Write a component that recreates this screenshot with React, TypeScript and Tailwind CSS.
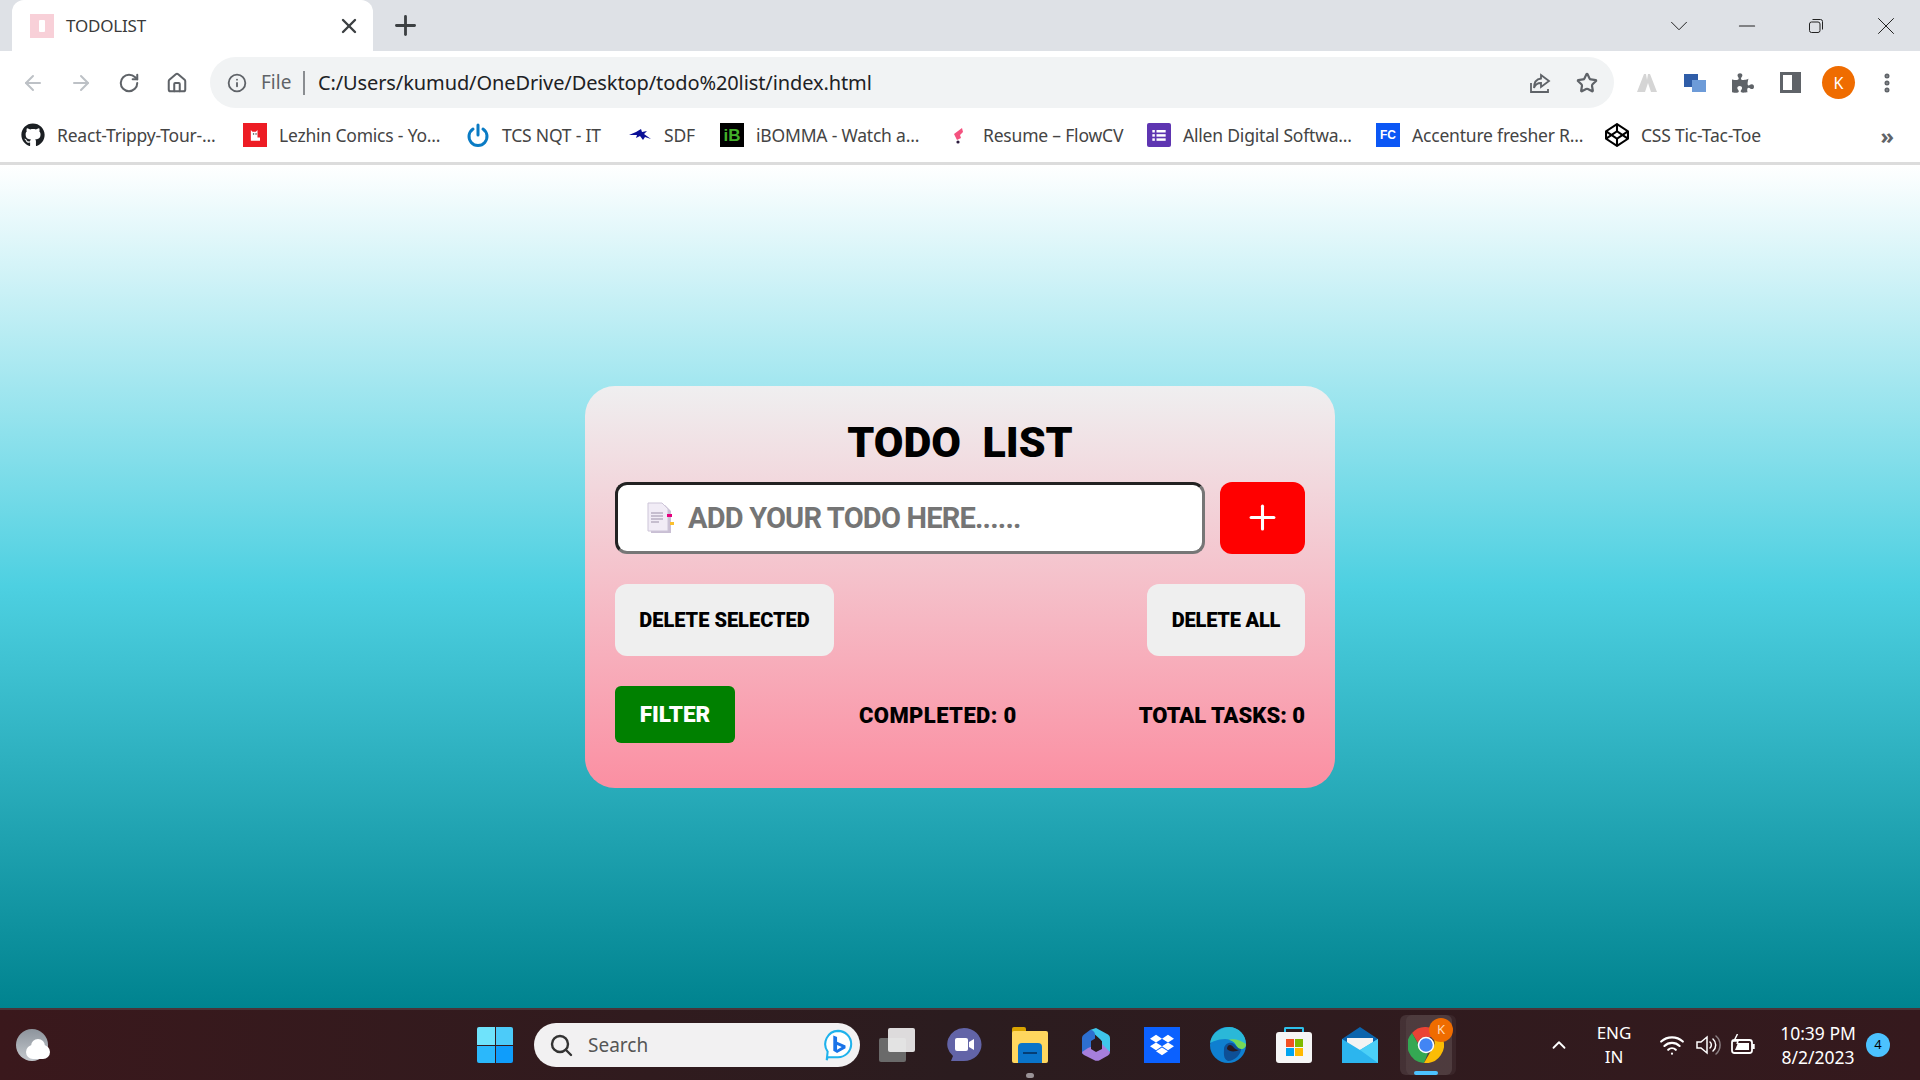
import {
  ArrowLeft,
  ArrowRight,
  ChevronDown,
  ChevronUp,
  Home,
  Info,
  Minus,
  MoreVertical,
  Plus,
  RotateCw,
  Star,
  Wifi,
  X,
} from 'lucide-react';
import { FaCodepen, FaDropbox, FaGithub, FaPuzzlePiece } from 'react-icons/fa';
import { ReactNode } from 'react';

const uiFont = "font-['Noto_Sans','Open_Sans',sans-serif]";
const todoFont = "font-['Roboto','Liberation_Sans',sans-serif]";

function SquareIcon({ className, children }: { className: string; children: ReactNode }) {
  return <span className={`flex h-6 w-6 shrink-0 items-center justify-center ${className}`}>{children}</span>;
}

const bookmarks: { label: string; width: string; icon: ReactNode }[] = [
  { label: 'React-Trippy-Tour-...', width: 'w-[162px]', icon: <FaGithub className="h-6 w-6 shrink-0 text-[#1b1f23]" /> },
  {
    label: 'Lezhin Comics - Yo...',
    width: 'w-[163px]',
    icon: (
      <SquareIcon className="bg-[#ed1c24]">
        <svg viewBox="0 0 24 24" className="h-5 w-5">
          <path d="M7 6l2 2h4l2-2v9h3v4H7z" fill="#fff" />
          <rect x="9.5" y="10" width="1.5" height="1.5" fill="#333" />
          <rect x="12.5" y="10" width="1.5" height="1.5" fill="#333" />
        </svg>
      </SquareIcon>
    ),
  },
  {
    label: 'TCS NQT - IT',
    width: 'w-[102px]',
    icon: (
      <svg viewBox="0 0 24 24" className="h-6 w-6 shrink-0" fill="none" stroke="#0a7bc4" strokeWidth="3" strokeLinecap="round">
        <path d="M7 6a9 9 0 1 0 10 0" />
        <path d="M12 2v10" />
      </svg>
    ),
  },
  {
    label: 'SDF',
    width: 'w-[32px]',
    icon: (
      <svg viewBox="0 0 24 24" className="h-6 w-6 shrink-0">
        <path d="M1 12l7-3 5-3 1 3 5-1-3 3 7 5-6-2-2 3-3-4-4 2 1-3z" fill="#0a0f96" />
      </svg>
    ),
  },
  {
    label: 'iBOMMA - Watch a...',
    width: 'w-[167px]',
    icon: (
      <SquareIcon className="bg-black">
        <span className="font-['Liberation_Sans',sans-serif] text-[17px] leading-none font-bold text-[#43b02a]">iB</span>
      </SquareIcon>
    ),
  },
  {
    label: 'Resume – FlowCV',
    width: 'w-[140px]',
    icon: (
      <svg viewBox="0 0 24 24" className="h-6 w-6 shrink-0">
        <path d="M7 11l8-6 1 4-3 3 1 3-4 2z" fill="#f4527f" />
        <circle cx="11" cy="19" r="1.6" fill="#2b1a3d" />
      </svg>
    ),
  },
  {
    label: 'Allen Digital Softwa...',
    width: 'w-[169px]',
    icon: (
      <SquareIcon className="rounded-[2px] bg-[#5e35b1]">
        <svg viewBox="0 0 24 24" className="h-5 w-5" fill="#fff">
          <rect x="4" y="6" width="3" height="3" />
          <rect x="9" y="6" width="11" height="3" />
          <rect x="4" y="11" width="3" height="3" />
          <rect x="9" y="11" width="11" height="3" />
          <rect x="4" y="16" width="3" height="3" />
          <rect x="9" y="16" width="11" height="3" />
        </svg>
      </SquareIcon>
    ),
  },
  {
    label: 'Accenture fresher R...',
    width: 'w-[169px]',
    icon: (
      <SquareIcon className="bg-[#0b57f5]">
        <span className="font-['Liberation_Sans',sans-serif] text-[12px] leading-none font-bold text-white">FC</span>
      </SquareIcon>
    ),
  },
  { label: 'CSS Tic-Tac-Toe', width: 'w-[126px]', icon: <FaCodepen className="h-6 w-6 shrink-0 text-black" /> },
];

function TabStrip() {
  return (
    <div className={`flex h-[51px] shrink-0 items-end bg-[#dee1e6] ${uiFont}`}>
      <div className="ml-3 flex h-[51px] w-[361px] items-center rounded-t-[12px] bg-white pr-[12px] pl-[18px]">
        <span className="flex h-6 w-6 items-center justify-center bg-[#f8d0d8]">
          <span className="h-3 w-[6px] rounded-[1px] bg-white" />
        </span>
        <span className="ml-[12px] flex-1 text-[17px] tracking-[-0.2px] text-[#3a3a3a]">TODOLIST</span>
        <X className="h-6 w-6 text-[#3c4043]" strokeWidth={2.4} />
      </div>
      <div className="flex h-[51px] w-[64px] items-center justify-center">
        <Plus className="h-[31px] w-[31px] text-[#3c4043]" strokeWidth={2.2} />
      </div>
      <div className="flex h-[51px] flex-1 items-center justify-end text-[#222]">
        <ChevronDown className="mr-[40px] h-[30px] w-[30px]" strokeWidth={0.8} />
        <Minus className="mr-[48px] h-[26px] w-[26px]" strokeWidth={1} />
        <svg viewBox="0 0 16 16" className="mr-[47px] h-4 w-4" fill="none" stroke="currentColor" strokeWidth="1">
          <rect x="1.5" y="4" width="10.5" height="10.5" rx="2" />
          <path d="M4.5 1.5h8a2 2 0 0 1 2 2v8" />
        </svg>
        <X className="mr-[19px] h-[30px] w-[30px]" strokeWidth={0.8} />
      </div>
    </div>
  );
}

function Toolbar() {
  return (
    <div className={`flex h-[57px] shrink-0 items-start bg-white pt-[6px] ${uiFont}`}>
      <div className="flex h-[51px] w-[210px] items-center pl-[21px] text-[#5f6368]">
        <ArrowLeft className="h-6 w-6 text-[#bdc1c6]" strokeWidth={2} />
        <ArrowRight className="ml-6 h-6 w-6 text-[#bdc1c6]" strokeWidth={2} />
        <RotateCw className="ml-[25px] h-[22px] w-[22px]" strokeWidth={2.2} />
        <Home className="ml-[26px] h-[22px] w-[22px]" strokeWidth={2.2} />
      </div>
      <div className="flex h-[51px] w-[1404px] items-center rounded-full bg-[#f1f3f4] pl-[17px] pr-[16px]">
        <Info className="h-[20px] w-[20px] text-[#5f6368]" strokeWidth={2.2} />
        <span className="ml-[14px] text-[19px] text-[#5f6368]">File</span>
        <span className="ml-[12px] h-[24px] w-[1.5px] bg-[#8a8d91]" />
        <span className="ml-[13px] flex-1 text-[20px] tracking-[-0.1px] text-[#202124]">
          C:/Users/kumud/OneDrive/Desktop/todo%20list/index.html
        </span>
        <svg viewBox="0 0 24 24" className="h-6 w-6 text-[#5f6368]" fill="none" stroke="currentColor" strokeWidth="1.8">
          <path d="M3 12v9h17v-3" />
          <path d="M13 4l8 6-8 6v-4c-4 0-6 2-7 5 0-6 3-9 7-9.500z" />
        </svg>
        <Star className="ml-[24px] h-[22px] w-[22px] text-[#5f6368]" strokeWidth={2.4} />
      </div>
      <div className="flex h-[51px] flex-1 items-center text-[#5f6368]">
        <svg viewBox="0 0 24 24" className="ml-[21px] h-6 w-6">
          <path d="M2 21L9 3h2l1 6 1-6h2l7 18h-6l-3-9-3 9z" fill="#d5d5d5" />
        </svg>
        <svg viewBox="0 0 24 24" className="ml-[24px] h-6 w-6">
          <rect x="1" y="3" width="14" height="13" fill="#2f5da8" />
          <rect x="9" y="9" width="14" height="12" fill="#6d9bd8" />
        </svg>
        <FaPuzzlePiece className="ml-[25px] h-[22px] w-[22px]" />
        <span className="ml-[26px] flex h-[21px] w-[21px] border-[3.500px] border-r-[9px] border-[#5f6368]" />
        <span className="ml-[21px] flex h-[33px] w-[33px] items-center justify-center rounded-full bg-[#ef6c00] text-[16px] text-white">K</span>
        <MoreVertical className="ml-[20px] h-6 w-6" strokeWidth={3} />
      </div>
    </div>
  );
}

function BookmarksBar() {
  return (
    <div className={`flex h-[57px] shrink-0 items-center gap-[24px] border-b-[3px] border-[#dcdcdc] bg-white pl-[21px] ${uiFont}`}>
      {bookmarks.map((item) => (
        <div key={item.label} className="flex items-center gap-[12px]">
          {item.icon}
          <span className={`${item.width} text-[17.500px] tracking-[-0.2px] whitespace-nowrap text-[#444]`}>{item.label}</span>
        </div>
      ))}
      <span className="ml-auto pr-[26px] text-[22px] leading-none font-bold text-[#5f6368]">»</span>
    </div>
  );
}

function TodoCard() {
  return (
    <div className={`flex h-[402px] w-[750px] flex-col rounded-[30px] bg-linear-to-b/srgb from-[#efeff0] to-[#fb8fa2] px-[30px] pt-[30px] ${todoFont}`}>
      <h1 className="h-[66px] pt-[1px] text-center text-[43px] leading-[50px] font-black whitespace-pre text-black">TODO  LIST</h1>
      <div className="flex gap-[15px]">
        <div className="flex h-[72px] flex-1 items-center rounded-[12px] border-[3px] border-t-[#222] border-r-[#767676] border-b-[#767676] border-l-[#222] bg-white pl-[28px]">
          <svg viewBox="0 0 30 32" className="h-[32px] w-[30px] shrink-0">
            <path d="M5 3h14l6 6v22H5z" fill="#c9bfd4" />
            <path d="M2 1h14l6 6v22H2z" fill="#f1ecf6" stroke="#cdc5d8" />
            <path d="M5 11h12M5 14h12M5 17h12M5 20h8" stroke="#9b8fa8" strokeWidth="1.200" />
            <rect x="21" y="12" width="5" height="3" fill="#e6007e" />
            <rect x="24" y="20" width="4" height="3" fill="#fbc02d" />
          </svg>
          <span className="ml-[12px] pt-[2px] text-[29px] font-bold tracking-[-0.8px] text-[#757575]">ADD YOUR TODO HERE......</span>
        </div>
        <button className="flex h-[72px] w-[85px] items-center justify-center rounded-[12px] bg-[#ff0000] text-white">
          <Plus className="h-[39px] w-[39px]" strokeWidth={1.9} />
        </button>
      </div>
      <div className="mt-[30px] flex justify-between">
        <button className="h-[72px] w-[219px] rounded-[12px] bg-[#efefef] text-[20px] font-black text-black">DELETE SELECTED</button>
        <button className="h-[72px] w-[158px] rounded-[12px] bg-[#efefef] text-[20px] font-black tracking-[-0.2px] text-black">DELETE ALL</button>
      </div>
      <div className="mt-[30px] flex items-center justify-between">
        <button className="h-[57px] w-[120px] rounded-[6px] bg-[#008000] pt-[2px] text-[22.500px] font-black text-white">FILTER</button>
        <span className="ml-[2px] pt-[2px] text-[22px] tracking-[0.4px] font-black text-black">COMPLETED: 0</span>
        <span className="pt-[2px] text-[22px] font-black text-black">TOTAL TASKS: 0</span>
      </div>
    </div>
  );
}

function TaskIcon({ children }: { children: ReactNode }) {
  return <div className="flex h-[60px] w-[66px] items-center justify-center">{children}</div>;
}

function Taskbar() {
  return (
    <div className={`relative flex h-[72px] shrink-0 items-center border-t-2 border-[#4a3338] bg-gradient-to-r from-[#3a181c] via-[#2b1c1f] to-[#35191d] ${uiFont}`}>
      <div className="relative ml-[16px] h-[32px] w-[34px]">
        <span className="absolute top-0 left-0 h-[32px] w-[32px] rounded-full bg-gradient-to-b from-[#8d949c] to-[#c4c8cd]" />
        <span className="absolute top-[16px] left-[10px] h-[14px] w-[24px] rounded-full bg-white" />
        <span className="absolute top-[10px] left-[15px] h-[14px] w-[14px] rounded-full bg-white" />
      </div>
      <div className="ml-[427px] grid h-[36px] w-[36px] grid-cols-2 gap-[1px]">
        <span className="rounded-tl-[2px] bg-[#6fe3fb]" />
        <span className="rounded-tr-[2px] bg-[#4ccbf9]" />
        <span className="rounded-bl-[2px] bg-[#2bb8fb]" />
        <span className="rounded-br-[2px] bg-[#0f9dfb]" />
      </div>
      <div className="ml-[21px] flex h-[44px] w-[326px] items-center rounded-full bg-[#f2f1f2] pl-[15px] pr-[6px]">
        <svg viewBox="0 0 24 24" className="h-[24px] w-[24px]" fill="none" stroke="#333" strokeWidth="2.400" strokeLinecap="round">
          <circle cx="11" cy="11" r="8" />
          <path d="M17 17l5 5" />
        </svg>
        <span className="ml-[15px] flex-1 text-[19px] text-[#555]">Search</span>
        <svg viewBox="0 0 32 34" className="h-[32px] w-[32px]">
          <path d="M16 2a14 14 0 1 1 0 28H5l-1 3 1-9A14 14 0 0 1 16 2z" fill="#fff" stroke="#1fb2ec" strokeWidth="2.200" />
          <path d="M11 7l4 1.500v5l9 4v3l-9 5-4-2.500z" fill="#1a73e8" />
          <path d="M15 17v5l5-3z" fill="#fff" />
        </svg>
      </div>
      <div className="ml-[5px] flex items-center">
        <TaskIcon>
          <div className="relative h-[34px] w-[38px]">
            <span className="absolute top-[10px] left-0 h-[24px] w-[27px] rounded-[2px] bg-[#6a6a6a]" />
            <span className="absolute top-0 left-[9px] h-[24px] w-[27px] rounded-[2px] bg-[#f1f1f1]/90" />
          </div>
        </TaskIcon>
        <TaskIcon>
          <svg viewBox="0 0 36 36" className="h-[36px] w-[36px]">
            <path d="M18 1a17 16 0 0 1 0 33H5l2-5A17 16 0 0 1 18 1z" fill="#6264a7" />
            <rect x="9" y="11" width="13" height="13" rx="2" fill="#fff" />
            <path d="M23 15l5-3v11l-5-3z" fill="#fff" />
          </svg>
        </TaskIcon>
        <TaskIcon>
          <div className="relative h-[36px] w-[36px]">
            <span className="absolute top-0 left-0 h-[10px] w-[14px] rounded-t-[2px] bg-[#d9a300]" />
            <span className="absolute top-[4px] left-0 h-[32px] w-[36px] rounded-[2px] bg-[#ffd75e]" />
            <span className="absolute bottom-0 left-[6px] h-[20px] w-[24px] rounded-t-[4px] bg-[#0a74c9]" />
            <span className="absolute bottom-[9px] left-[11px] h-[2px] w-[14px] bg-[#053e75]" />
            <span className="absolute top-[46px] left-[14px] h-[5px] w-[8px] rounded-full bg-[#9a9397]" />
          </div>
        </TaskIcon>
        <TaskIcon>
          <svg viewBox="0 0 36 36" className="h-[36px] w-[36px]">
            <path d="M12 3L18 1l12 6.500a4 4 0 0 1 2 3.500v14L23 20v-7z" fill="#3fc6ec" />
            <path d="M4 11a4 4 0 0 1 2-3.500L12 3c3 0 5 2 5 5v10l-8 5-5 4z" fill="#2d6fd0" />
            <path d="M4 25l6-4 13-5 9 9a4 4 0 0 1-2 3.500L22 33a6 6 0 0 1-6 0L6 28a4 4 0 0 1-2-3z" fill="#a67fdc" />
            <path d="M13 14l5-3 6 3v8l-6 3-5-3z" fill="#2a1a20" />
          </svg>
        </TaskIcon>
        <TaskIcon>
          <span className="flex h-[36px] w-[36px] items-center justify-center bg-[#0b61ff]">
            <FaDropbox className="h-[24px] w-[24px] text-white" />
          </span>
        </TaskIcon>
        <TaskIcon>
          <svg viewBox="0 0 36 36" className="h-[36px] w-[36px]">
            <circle cx="18" cy="18" r="18" fill="#0f7fd0" />
            <path d="M0 16C2 5 12 0 19 0c10 0 17 8 17 17 0 6-7 6-9 3-2-5-6-8-12-8-7 0-13 3-15 4z" fill="#2ab8d8" />
            <path d="M36 17c0 6-7 6-9 3-2-5-5-7-9-7 6-2 12 0 18 4z" fill="#76d957" />
            <path d="M14 22c0-5 6-8 10-5 3 2 4 5 7 5 0 5-6 12-13 12-5-2-4-8-4-12z" fill="#0e4f96" />
            <path d="M20 18c3 0 4 5 9 5-3 2-10 2-12-1 0-2 1-4 3-4z" fill="#2a1a20" />
          </svg>
        </TaskIcon>
        <TaskIcon>
          <div className="relative h-[36px] w-[36px]">
            <span className="absolute top-0 left-[8px] h-[8px] w-[20px] rounded-t-[2px] border-2 border-b-0 border-[#2dc0ea]" />
            <span className="absolute top-[5px] left-0 grid h-[31px] w-[36px] place-content-center rounded-[3px] bg-[#f6f6f6]">
              <span className="grid grid-cols-2 gap-[1px]">
                <span className="h-[8px] w-[8px] bg-[#f25022]" />
                <span className="h-[8px] w-[8px] bg-[#7fba00]" />
                <span className="h-[8px] w-[8px] bg-[#00a4ef]" />
                <span className="h-[8px] w-[8px] bg-[#ffb900]" />
              </span>
            </span>
          </div>
        </TaskIcon>
        <TaskIcon>
          <svg viewBox="0 0 36 36" className="h-[36px] w-[36px]">
            <path d="M0 12L18 0l18 12v24H0z" fill="#0a64ad" />
            <path d="M5 11h26v8l-13 7-13-7z" fill="#f3f3f3" />
            <path d="M0 12l18 11 18-11v24H0z" fill="#2cb5ee" />
            <path d="M36 12v24L18 23z" fill="#4bd0f7" />
          </svg>
        </TaskIcon>
        <div className="relative">
          <span className="absolute top-[0px] left-[13px] h-[60px] w-[50px] rounded-[6px] bg-white/5" />
          <span className="absolute top-[0px] left-[7px] h-[60px] w-[52px] rounded-[6px] bg-white/10" />
          <div className="relative">
            <TaskIcon>
              <svg viewBox="0 0 36 36" className="h-[36px] w-[36px]">
                <path d="M18 0a18 18 0 0 1 16 10H18a8 8 0 0 0-8 6L4 6A18 18 0 0 1 18 0z" fill="#ea4335" />
                <path d="M4 6l8 14a8 8 0 0 0 8 6l-4 10A18 18 0 0 1 4 6z" fill="#34a853" />
                <path d="M34 10a18 18 0 0 1-18 26l8-14a8 8 0 0 0 0-12z" fill="#fbbc05" />
                <circle cx="18" cy="18" r="7.500" fill="#4285f4" stroke="#fff" strokeWidth="1.500" />
              </svg>
            </TaskIcon>
          </div>
          <span className="absolute top-[3px] left-[36px] flex h-[24px] w-[24px] items-center justify-center rounded-full bg-[#ef6c00] text-[13px] text-[#ffd9b5]">K</span>
          <span className="absolute bottom-[0px] left-[21px] h-[4px] w-[24px] rounded-full bg-[#4cc2ff]" />
        </div>
      </div>
      <div className="ml-auto flex items-center pr-[30px] text-white">
        <ChevronUp className="h-[22px] w-[22px]" strokeWidth={2} />
        <div className="ml-[24px] flex w-[40px] flex-col items-center text-[17px] leading-[24px]">
          <span>ENG</span>
          <span>IN</span>
        </div>
        <Wifi className="ml-[25px] h-[26px] w-[26px]" strokeWidth={2} />
        <svg viewBox="0 0 26 24" className="ml-[10px] h-[24px] w-[26px]" fill="none" stroke="#fff" strokeWidth="1.500" strokeLinecap="round">
          <path d="M2 9v6h4l6 5V4L6 9z" />
          <path d="M15 9a4 4 0 0 1 0 6" />
          <path d="M18 6a8 8 0 0 1 0 12" />
          <path d="M21 3a12 12 0 0 1 0 18" stroke="#8a7f82" />
        </svg>
        <svg viewBox="0 0 26 22" className="ml-[9px] h-[22px] w-[26px]" fill="none" stroke="#fff" strokeWidth="1.800">
          <rect x="2" y="6" width="20" height="13" rx="2.500" />
          <path d="M5 16l3-7h11v7z" fill="#fff" stroke="none" />
          <path d="M23.500 10v5" strokeWidth="2.400" />
          <path d="M7.500 0L4 7h4l-1 3" strokeWidth="1.500" />
        </svg>
        <div className="ml-[21px] flex w-[82px] flex-col items-center text-[17.500px] leading-[24px]">
          <span>10:39 PM</span>
          <span>8/2/2023</span>
        </div>
        <span className="ml-[7px] flex h-[24px] w-[24px] items-center justify-center rounded-full bg-[#4cc2ff] text-[13px] text-black">4</span>
      </div>
    </div>
  );
}

export default function App() {
  return (
    <div className="flex h-screen flex-col overflow-hidden bg-white">
      <TabStrip />
      <Toolbar />
      <BookmarksBar />
      <main className="flex flex-1 items-center justify-center bg-linear-to-b/srgb from-white via-[#4dd0e1] to-[#00838f]">
        <TodoCard />
      </main>
      <Taskbar />
    </div>
  );
}
